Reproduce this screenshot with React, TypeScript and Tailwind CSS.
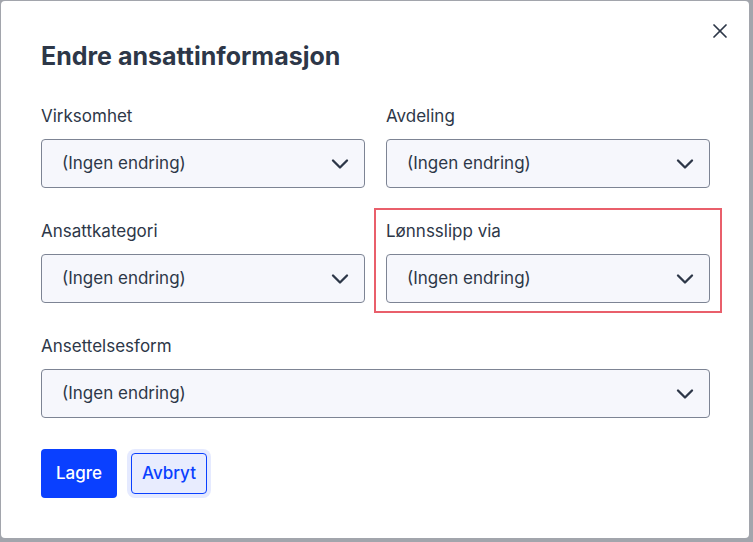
import React from 'react';
import { ChevronDown, X } from 'lucide-react';

const Field: React.FC<{ label: string; highlight?: boolean }> = ({ label, highlight }) => {
  return (
    <div className="relative">
      {highlight && (
        <div className="pointer-events-none absolute -left-[12px] -right-[12px] -top-[11px] -bottom-[10px] border-2 border-[#e95f6b]" />
      )}
      <div className="h-6 leading-6 text-[17px] text-[#2d3748]">{label}</div>
      <div className="mt-[11px] h-[49px] flex items-center justify-between rounded-[4px] border border-[#7d8494] bg-[#f6f7fc] pl-[20px] pr-[10px]">
        <span className="text-[17px] text-[#2d3748]">(Ingen endring)</span>
        <ChevronDown size={28} strokeWidth={2} className="text-[#2d3748]" />
      </div>
    </div>
  );
};

export default function App() {
  return (
    <div
      className="w-[753px] h-[542px] bg-[#a2a5ac] pl-px pt-px"
      style={{ fontFamily: 'Inter, "Noto Sans", sans-serif' }}
    >
      <div className="relative w-[748px] h-[537px] bg-white rounded-[4px] pl-[40px] pr-[39px] pt-[41px]">
        {/* Close */}
        <button className="absolute right-[17px] top-[18px] text-[#2d3748]">
          <X size={24} strokeWidth={1.75} />
        </button>

        <h1 className="h-7 leading-7 text-[25px] font-bold text-[#2d3748]">Endre ansattinformasjon</h1>

        <div className="mt-[34px] grid grid-cols-2 gap-x-[21px] gap-y-[31px]">
          <Field label="Virksomhet" />
          <Field label="Avdeling" />
          <Field label="Ansattkategori" />
          <Field label="Lønnsslipp via" highlight />
          <div className="col-span-2">
            <Field label="Ansettelsesform" />
          </div>
        </div>

        <div className="mt-[31px] flex items-center">
          <button className="w-[76px] h-[49px] rounded-[4px] bg-[#0a40ff] text-white text-[17px] font-medium">
            Lagre
          </button>
          <button className="ml-[14px] w-[76px] h-[41px] rounded-[4px] border border-[#0a40ff] bg-[#e8ecfe] text-[#0a40ff] text-[17px] font-medium ring-4 ring-[#e5eaff]">
            Avbryt
          </button>
        </div>
      </div>
    </div>
  );
}
